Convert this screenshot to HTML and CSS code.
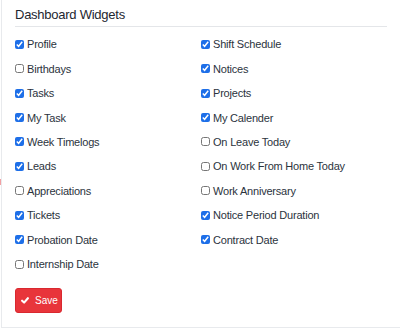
FILE: index.html
```html
<!DOCTYPE html>
<html>
<head>
<meta charset="utf-8">
<link rel="stylesheet" href="styles.css">
</head>
<body>
<div class="card">
  <span class="edge-mark"></span>
  <h3 class="title">Dashboard Widgets</h3>
  <div class="grid">
    <label class="item"><input type="checkbox" checked><span>Profile</span></label>
    <label class="item"><input type="checkbox" checked><span>Shift Schedule</span></label>
    <label class="item"><input type="checkbox"><span>Birthdays</span></label>
    <label class="item"><input type="checkbox" checked><span>Notices</span></label>
    <label class="item"><input type="checkbox" checked><span>Tasks</span></label>
    <label class="item"><input type="checkbox" checked><span>Projects</span></label>
    <label class="item"><input type="checkbox" checked><span>My Task</span></label>
    <label class="item"><input type="checkbox" checked><span>My Calender</span></label>
    <label class="item"><input type="checkbox" checked><span>Week Timelogs</span></label>
    <label class="item"><input type="checkbox"><span>On Leave Today</span></label>
    <label class="item"><input type="checkbox" checked><span>Leads</span></label>
    <label class="item"><input type="checkbox"><span>On Work From Home Today</span></label>
    <label class="item"><input type="checkbox"><span>Appreciations</span></label>
    <label class="item"><input type="checkbox"><span>Work Anniversary</span></label>
    <label class="item"><input type="checkbox" checked><span>Tickets</span></label>
    <label class="item"><input type="checkbox" checked><span>Notice Period Duration</span></label>
    <label class="item"><input type="checkbox" checked><span>Probation Date</span></label>
    <label class="item"><input type="checkbox" checked><span>Contract Date</span></label>
    <label class="item"><input type="checkbox"><span>Internship Date</span></label>
  </div>
  <button class="save" type="button">
    <svg width="8" height="7" viewBox="0 0 8 7"><path d="M1.1 3.7 L3.1 5.6 L6.9 1.2" fill="none" stroke="#fff" stroke-width="2.1" stroke-linecap="round" stroke-linejoin="round"/></svg>
    <span>Save</span>
  </button>
</div>
</body>
</html>
```

FILE: styles.css
```css
html, body {
  margin: 0;
  padding: 0;
  background: #ffffff;
}
body {
  font-family: "Liberation Sans", Arial, sans-serif;
  color: #28313c;
}
.card {
  position: relative;
  box-sizing: border-box;
  width: 400px;
  height: 328px;
  margin-left: 1px;
  border-left: 1px solid #e8eaed;
  border-bottom: 1px solid #e8eaed;
  padding: 0 14px 0 13px;
}
.edge-mark {
  position: absolute;
  left: -2px;
  top: 179px;
  width: 1px;
  height: 6px;
  background: #f2a0a3;
}
.title {
  margin: 0;
  padding: 7px 0 4px;
  font-size: 13px;
  letter-spacing: -0.25px;
  font-weight: normal;
  line-height: 15px;
  color: #1d2630;
  border-bottom: 1px solid #e4e6e9;
}
.grid {
  display: grid;
  grid-template-columns: 186px 1fr;
  grid-auto-rows: 24.45px;
  padding-top: 5px;
}
.item {
  display: flex;
  align-items: center;
  gap: 3px;
  font-size: 11px;
  letter-spacing: -0.2px;
  color: #2b333d;
}
.item input {
  margin: 0;
  width: 9px;
  height: 9px;
  accent-color: #1e6fe8;
}
.save {
  margin-top: 12px;
  display: flex;
  align-items: center;
  gap: 6px;
  box-sizing: border-box;
  height: 25px;
  width: 47px;
  padding: 0 0 0 5px;
  border: 1px solid #d9282f;
  border-radius: 3px;
  background: #e8353b;
  color: #ffffff;
  font-family: "Liberation Sans", Arial, sans-serif;
  font-size: 10px;
}
```
